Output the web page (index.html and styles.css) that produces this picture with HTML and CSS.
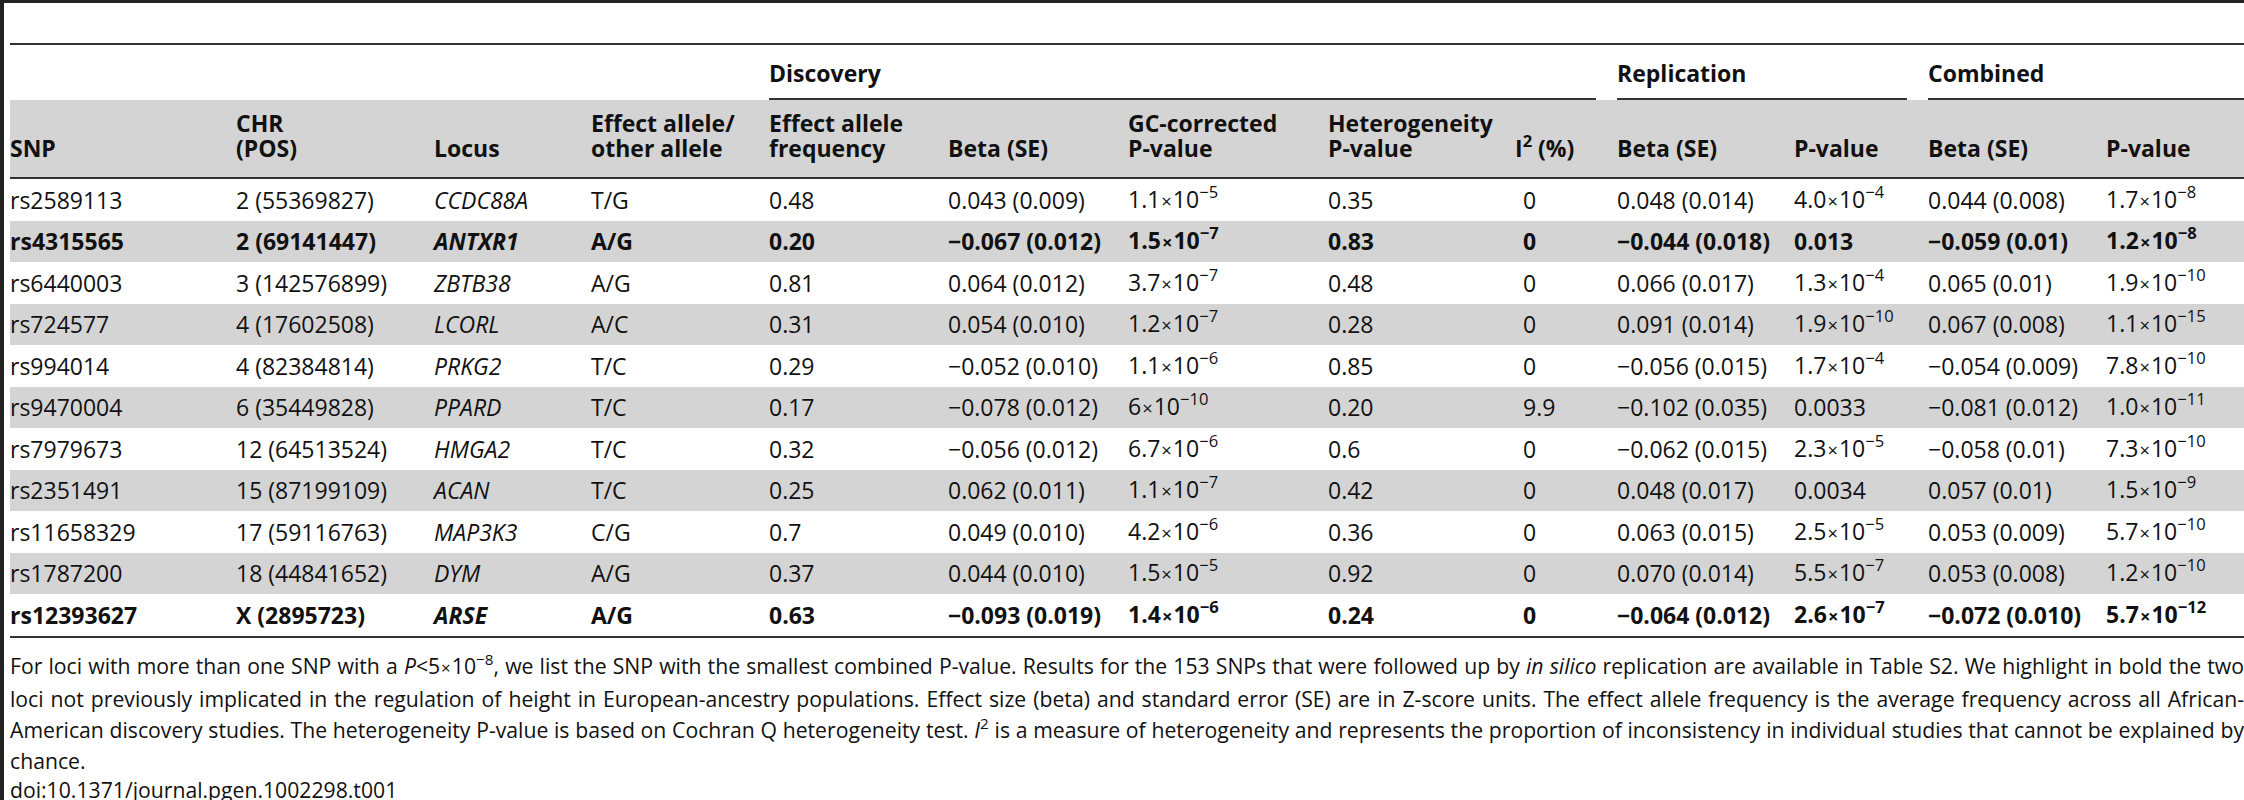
FILE: index.html
```html
<!DOCTYPE html>
<html lang="en">
<head>
    <meta charset="UTF-8">
    <title>Table 1</title>
    <link rel="stylesheet" href="styles.css">
</head>
<body>
<div class="frame">
    <table class="results">
        <colgroup>
            <col style="width: 226px">
            <col style="width: 198px">
            <col style="width: 157px">
            <col style="width: 178px">
            <col style="width: 179px">
            <col style="width: 180px">
            <col style="width: 200px">
            <col style="width: 187px">
            <col style="width: 102px">
            <col style="width: 177px">
            <col style="width: 134px">
            <col style="width: 178px">
            <col>
        </colgroup>
        <thead>
            <tr class="group">
                <th colspan="4"></th>
                <th colspan="5" class="sect">Discovery</th>
                <th colspan="2" class="sect">Replication</th>
                <th colspan="2" class="sect last">Combined</th>
            </tr>
            <tr class="cols">
                <th>SNP</th>
                <th>CHR<br>(POS)</th>
                <th>Locus</th>
                <th>Effect allele/<br>other allele</th>
                <th>Effect allele<br>frequency</th>
                <th>Beta (SE)</th>
                <th>GC-corrected<br>P-value</th>
                <th>Heterogeneity<br>P-value</th>
                <th>I<sup>2</sup> (%)</th>
                <th>Beta (SE)</th>
                <th>P-value</th>
                <th>Beta (SE)</th>
                <th>P-value</th>
            </tr>
        </thead>
        <tbody>
            <tr>
                <td>rs2589113</td><td>2 (55369827)</td><td class="gene">CCDC88A</td><td>T/G</td>
                <td>0.48</td><td>0.043 (0.009)</td><td>1.1<span class="x">×</span>10<sup>−5</sup></td><td>0.35</td><td class="i2">0</td>
                <td>0.048 (0.014)</td><td>4.0<span class="x">×</span>10<sup>−4</sup></td>
                <td>0.044 (0.008)</td><td>1.7<span class="x">×</span>10<sup>−8</sup></td>
            </tr>
            <tr class="hl">
                <td>rs4315565</td><td>2 (69141447)</td><td class="gene">ANTXR1</td><td>A/G</td>
                <td>0.20</td><td>−0.067 (0.012)</td><td>1.5<span class="x">×</span>10<sup>−7</sup></td><td>0.83</td><td class="i2">0</td>
                <td>−0.044 (0.018)</td><td>0.013</td>
                <td>−0.059 (0.01)</td><td>1.2<span class="x">×</span>10<sup>−8</sup></td>
            </tr>
            <tr>
                <td>rs6440003</td><td>3 (142576899)</td><td class="gene">ZBTB38</td><td>A/G</td>
                <td>0.81</td><td>0.064 (0.012)</td><td>3.7<span class="x">×</span>10<sup>−7</sup></td><td>0.48</td><td class="i2">0</td>
                <td>0.066 (0.017)</td><td>1.3<span class="x">×</span>10<sup>−4</sup></td>
                <td>0.065 (0.01)</td><td>1.9<span class="x">×</span>10<sup>−10</sup></td>
            </tr>
            <tr>
                <td>rs724577</td><td>4 (17602508)</td><td class="gene">LCORL</td><td>A/C</td>
                <td>0.31</td><td>0.054 (0.010)</td><td>1.2<span class="x">×</span>10<sup>−7</sup></td><td>0.28</td><td class="i2">0</td>
                <td>0.091 (0.014)</td><td>1.9<span class="x">×</span>10<sup>−10</sup></td>
                <td>0.067 (0.008)</td><td>1.1<span class="x">×</span>10<sup>−15</sup></td>
            </tr>
            <tr>
                <td>rs994014</td><td>4 (82384814)</td><td class="gene">PRKG2</td><td>T/C</td>
                <td>0.29</td><td>−0.052 (0.010)</td><td>1.1<span class="x">×</span>10<sup>−6</sup></td><td>0.85</td><td class="i2">0</td>
                <td>−0.056 (0.015)</td><td>1.7<span class="x">×</span>10<sup>−4</sup></td>
                <td>−0.054 (0.009)</td><td>7.8<span class="x">×</span>10<sup>−10</sup></td>
            </tr>
            <tr>
                <td>rs9470004</td><td>6 (35449828)</td><td class="gene">PPARD</td><td>T/C</td>
                <td>0.17</td><td>−0.078 (0.012)</td><td>6<span class="x">×</span>10<sup>−10</sup></td><td>0.20</td><td class="i2">9.9</td>
                <td>−0.102 (0.035)</td><td>0.0033</td>
                <td>−0.081 (0.012)</td><td>1.0<span class="x">×</span>10<sup>−11</sup></td>
            </tr>
            <tr>
                <td>rs7979673</td><td>12 (64513524)</td><td class="gene">HMGA2</td><td>T/C</td>
                <td>0.32</td><td>−0.056 (0.012)</td><td>6.7<span class="x">×</span>10<sup>−6</sup></td><td>0.6</td><td class="i2">0</td>
                <td>−0.062 (0.015)</td><td>2.3<span class="x">×</span>10<sup>−5</sup></td>
                <td>−0.058 (0.01)</td><td>7.3<span class="x">×</span>10<sup>−10</sup></td>
            </tr>
            <tr>
                <td>rs2351491</td><td>15 (87199109)</td><td class="gene">ACAN</td><td>T/C</td>
                <td>0.25</td><td>0.062 (0.011)</td><td>1.1<span class="x">×</span>10<sup>−7</sup></td><td>0.42</td><td class="i2">0</td>
                <td>0.048 (0.017)</td><td>0.0034</td>
                <td>0.057 (0.01)</td><td>1.5<span class="x">×</span>10<sup>−9</sup></td>
            </tr>
            <tr>
                <td>rs11658329</td><td>17 (59116763)</td><td class="gene">MAP3K3</td><td>C/G</td>
                <td>0.7</td><td>0.049 (0.010)</td><td>4.2<span class="x">×</span>10<sup>−6</sup></td><td>0.36</td><td class="i2">0</td>
                <td>0.063 (0.015)</td><td>2.5<span class="x">×</span>10<sup>−5</sup></td>
                <td>0.053 (0.009)</td><td>5.7<span class="x">×</span>10<sup>−10</sup></td>
            </tr>
            <tr>
                <td>rs1787200</td><td>18 (44841652)</td><td class="gene">DYM</td><td>A/G</td>
                <td>0.37</td><td>0.044 (0.010)</td><td>1.5<span class="x">×</span>10<sup>−5</sup></td><td>0.92</td><td class="i2">0</td>
                <td>0.070 (0.014)</td><td>5.5<span class="x">×</span>10<sup>−7</sup></td>
                <td>0.053 (0.008)</td><td>1.2<span class="x">×</span>10<sup>−10</sup></td>
            </tr>
            <tr class="hl">
                <td>rs12393627</td><td>X (2895723)</td><td class="gene">ARSE</td><td>A/G</td>
                <td>0.63</td><td>−0.093 (0.019)</td><td>1.4<span class="x">×</span>10<sup>−6</sup></td><td>0.24</td><td class="i2">0</td>
                <td>−0.064 (0.012)</td><td>2.6<span class="x">×</span>10<sup>−7</sup></td>
                <td>−0.072 (0.010)</td><td>5.7<span class="x">×</span>10<sup>−12</sup></td>
            </tr>
        </tbody>
    </table>

    <!-- table footnote -->
    <p class="note">For loci with more than one SNP with a <i>P</i>&lt;5<span class="x">×</span>10<sup>−8</sup>, we list the SNP with the smallest combined P-value. Results for the 153 SNPs that were followed up by <i>in silico</i> replication are available in Table S2. We highlight in bold the two loci not previously implicated in the regulation of height in European-ancestry populations. Effect size (beta) and standard error (SE) are in Z-score units. The effect allele frequency is the average frequency across all African-American discovery studies. The heterogeneity P-value is based on Cochran Q heterogeneity test. <i>I</i><sup>2</sup> is a measure of heterogeneity and represents the proportion of inconsistency in individual studies that cannot be explained by chance.</p>
    <p class="doi">doi:10.1371/journal.pgen.1002298.t001</p>
</div>
</body>
</html>
```

FILE: styles.css
```css
body { margin: 0; font-family: "Open Sans", sans-serif; font-stretch: 92%; font-size: 23px; color: #111; background: #fff; }
.frame { border-top: 3px solid #222; border-left: 4px solid #222; padding: 40px 0 0 6px; min-height: 800px; box-sizing: border-box; }

.results { width: 2234px; border-collapse: collapse; table-layout: fixed; border-top: 2px solid #333; }
.results th, .results td { padding: 0; text-align: left; white-space: nowrap; }
sup { font-size: 0.72em; line-height: 0; vertical-align: 0.6em; }
.x { font-size: 0.8em; padding: 0 1px; }

.group th { height: 55px; vertical-align: middle; font-weight: bold; }
.group .sect { background: linear-gradient(#333, #333) left bottom / calc(100% - 21px) 2px no-repeat; }
.group .last { background-size: 100% 2px; }

.cols th { background: #d4d4d4; height: 61px; vertical-align: bottom; padding-bottom: 16px; line-height: 25px; border-bottom: 2px solid #333; }

tbody td { height: 41.5px; line-height: 28px; vertical-align: middle; }
tbody tr:nth-child(even) td { background: #d4d4d4; }
tbody tr.hl td { font-weight: bold; }
tbody tr:last-child td { border-bottom: 2px solid #333; }
.gene { font-style: italic; }
.i2 { padding-left: 8px !important; }

.note { margin: 12px 0 0; line-height: 31px; font-size: 21.2px; text-align: justify; }
.doi { margin: 0; line-height: 27px; font-size: 21.2px; }
```
